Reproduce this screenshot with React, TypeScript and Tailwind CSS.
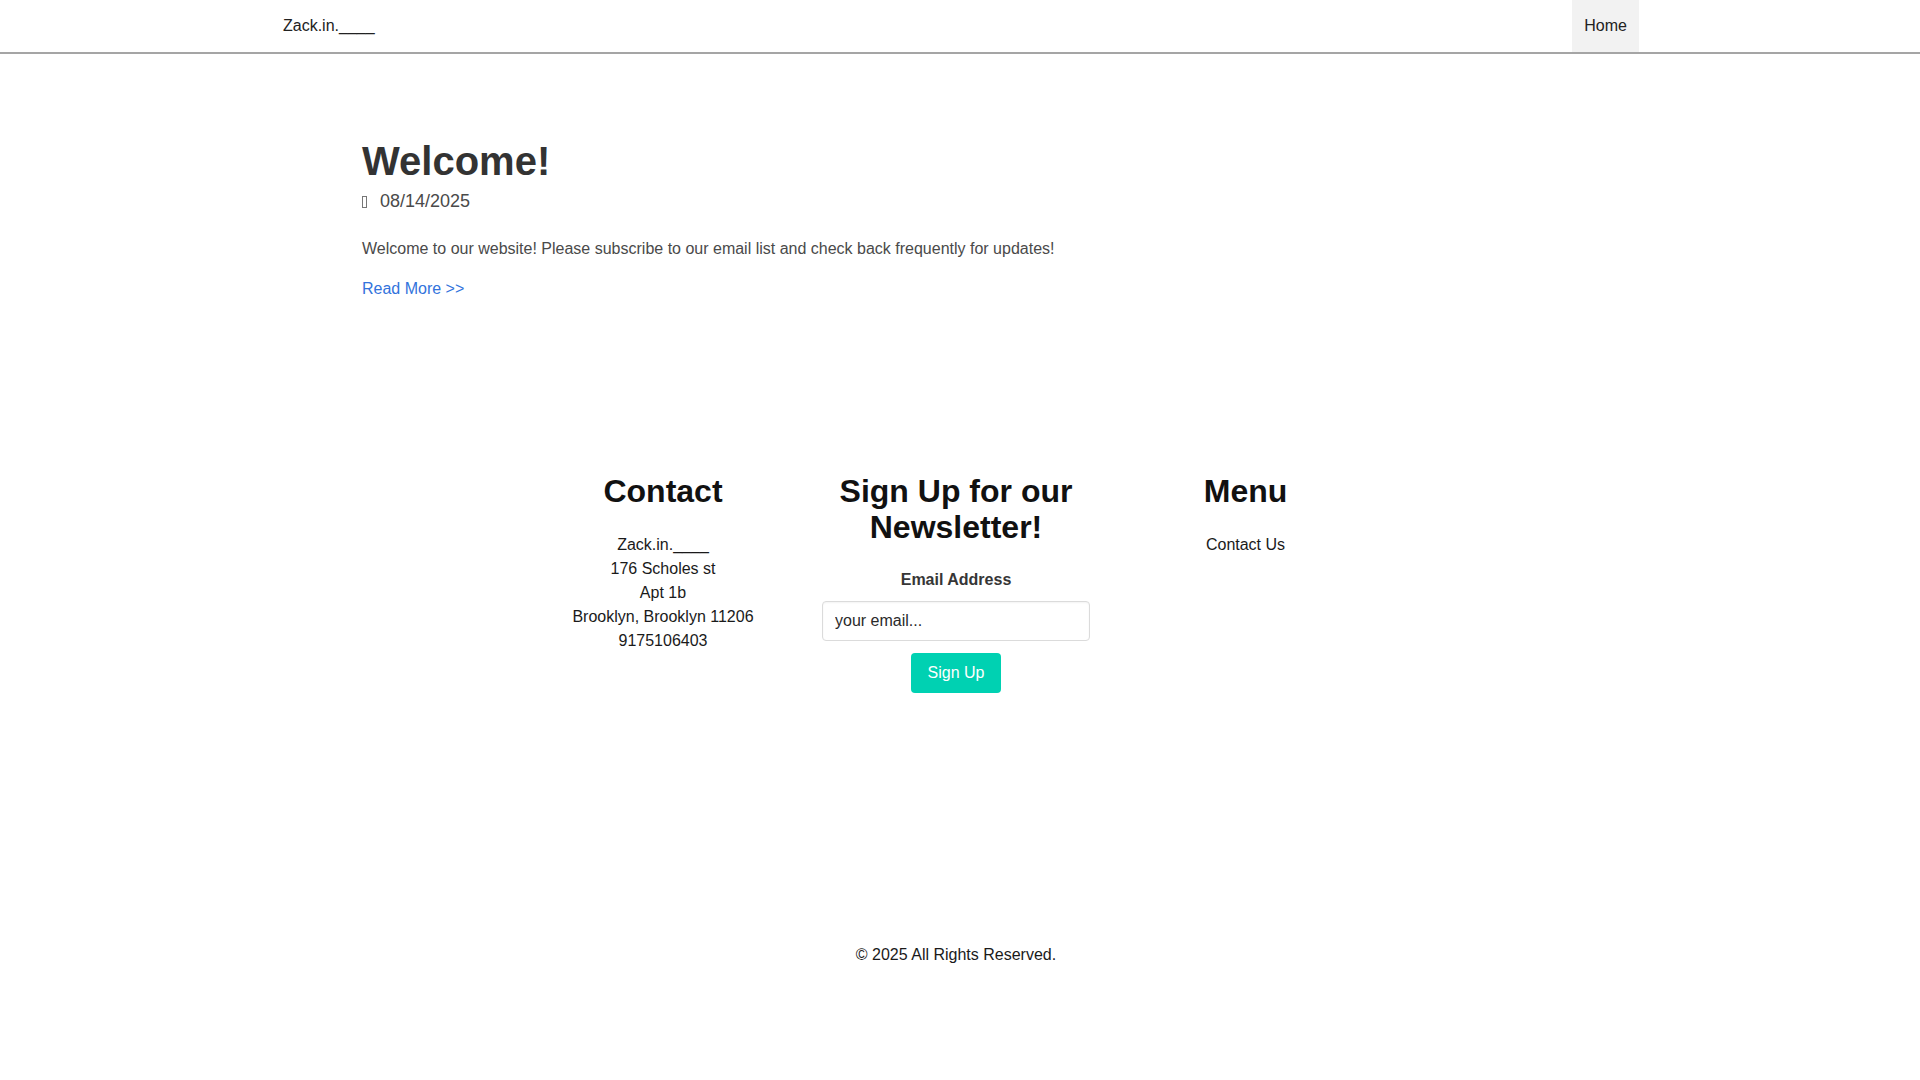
import { useState } from "react"

const Navbar = () => {
  return (
    <nav className="flex h-[54px] items-stretch justify-between border-b-2 border-[#a5a5a5] pl-[283px] pr-[281px]">
      <a className="flex items-center text-base leading-6 text-[#222]">Zack.in.____</a>
      <a className="flex items-center bg-[#f2f2f2] px-[12px] text-base leading-6 text-[#222]">Home</a>
    </nav>
  )
}

const Post = () => {
  return (
    <section className="pl-[362px] pt-[85px]">
      <h1 className="text-[40px] font-bold leading-[44px] text-[#333]">Welcome!</h1>
      {/* date, icon font did not load so it is a box */}
      <div className="mt-[5px] flex items-center text-[18px] leading-[27px] text-[#4a4a4a]">
        <span className="mr-[13px] h-[12px] w-[5px] border border-[#777]"></span>
        <span>08/14/2025</span>
      </div>
      <p className="mt-[22px] text-base leading-6 text-[#4a4a4a]">
        Welcome to our website! Please subscribe to our email list and check back frequently for updates!
      </p>
      <a className="mt-[16px] block text-base leading-6 text-[#3273dc]">Read More &gt;&gt;</a>
    </section>
  )
}

const Footer = () => {
  const [email, setEmail] = useState("")
  return (
    <footer className="mt-[172px]">
      <div className="flex justify-center pr-[15px]">
        {/* contact */}
        <div className="w-[293px] text-center text-[#1a1a1a]">
          <h2 className="mb-[24px] text-[32px] font-bold leading-[36px] text-[#111]">Contact</h2>
          <p className="leading-6">Zack.in.____</p>
          <p className="leading-6">176 Scholes st</p>
          <p className="leading-6">Apt 1b</p>
          <p className="leading-6">Brooklyn, Brooklyn 11206</p>
          <p className="leading-6">9175106403</p>
        </div>
        {/* newsletter */}
        <div className="flex w-[293px] flex-col items-center text-center">
          <h2 className="mb-[23px] text-[32px] font-bold leading-[36px] text-[#111]">Sign Up for our Newsletter!</h2>
          <label className="mb-[9px] font-bold leading-6 text-[#363636]">Email Address</label>
          <input
            value={email}
            onChange={(e) => setEmail(e.target.value)}
            placeholder="your email..."
            className="h-[40px] w-[268px] rounded-[4px] border border-[#dbdbdb] px-[12px] text-base text-[#222] shadow-[inset_0_1px_2px_rgba(10,10,10,0.05)] outline-none placeholder:text-[#2a2a2a]"
          />
          <button className="mt-[12px] h-[40px] rounded-[4px] bg-[#00d1b2] px-[17px] text-base text-white">Sign Up</button>
        </div>
        {/* menu */}
        <div className="w-[286px] text-center">
          <h2 className="mb-[24px] text-[32px] font-bold leading-[36px] text-[#111]">Menu</h2>
          <a className="leading-6 text-[#1a1a1a]">Contact Us</a>
        </div>
      </div>
      <p className="mt-[250px] pr-[8px] text-center leading-6 text-[#1a1a1a]">© 2025 All Rights Reserved.</p>
    </footer>
  )
}

const App = () => {
  return (
    <div className="min-h-screen bg-white font-['Liberation_Sans',Arial,sans-serif]">
      <Navbar />
      <Post />
      <Footer />
    </div>
  )
}

export default App
